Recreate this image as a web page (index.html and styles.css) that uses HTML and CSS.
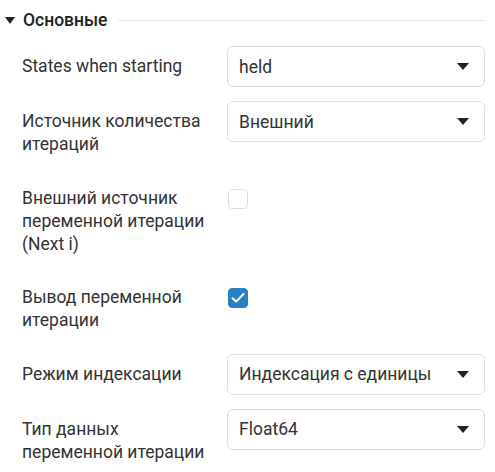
FILE: index.html
```html
<!DOCTYPE html>
<html lang="ru">
<head>
    <meta charset="UTF-8">
    <meta name="viewport" content="width=device-width, initial-scale=1.0">
    <title>Основные</title>
    <link rel="stylesheet" href="styles.css">
</head>
<body>
    <section class="group">
        <div class="group-head">
            <span class="caret"></span>
            <span class="group-title">Основные</span>
            <span class="group-line"></span>
        </div>

        <div class="row">
            <div class="label">States when starting</div>
            <div class="select"><span>held</span><span class="arrow"></span></div>
        </div>

        <div class="row">
            <div class="label">Источник количества итераций</div>
            <div class="select"><span>Внешний</span><span class="arrow"></span></div>
        </div>

        <div class="row">
            <div class="label">Внешний источник переменной итерации (Next i)</div>
            <div class="check-wrap"><span class="check"></span></div>
        </div>

        <div class="row">
            <div class="label">Вывод переменной итерации</div>
            <div class="check-wrap">
                <span class="check checked">
                    <svg width="14" height="12" viewBox="0 0 14 12"><path d="M1.5 6.2 L5.2 9.6 L12.5 2" fill="none" stroke="#fff" stroke-width="2" stroke-linecap="round" stroke-linejoin="round"/></svg>
                </span>
            </div>
        </div>

        <div class="row">
            <div class="label">Режим индексации</div>
            <div class="select"><span>Индексация с единицы</span><span class="arrow"></span></div>
        </div>

        <div class="row">
            <div class="label">Тип данных переменной итерации</div>
            <div class="select"><span>Float64</span><span class="arrow"></span></div>
        </div>
    </section>
</body>
</html>
```

FILE: styles.css
```css
body {
    margin: 0;
    padding: 0;
    font-family: Roboto, 'Liberation Sans', sans-serif;
    font-size: 17.5px;
    color: #333;
    background: #fff;
}

.group {
    padding: 8px 10px 0 5px;
}

.group-head {
    display: flex;
    align-items: center;
    height: 24px;
}

.caret {
    width: 0;
    height: 0;
    border-left: 5.5px solid transparent;
    border-right: 5.5px solid transparent;
    border-top: 7px solid #222;
    margin-right: 8px;
}

.group-title {
    font-weight: 500;
    color: #222;
}

.group-line {
    flex: 1;
    height: 1px;
    background: #e6e6e6;
    margin-left: 11px;
}

.row {
    display: grid;
    grid-template-columns: 183px 258px;
    column-gap: 22px;
    margin-left: 17px;
    margin-top: 14px;
    align-items: start;
}

.row:first-of-type {
    margin-top: 13px;
}

.label {
    line-height: 23px;
    padding: 9px 0 7.5px;
}

.select {
    height: 41px;
    box-sizing: border-box;
    border: 1px solid #dcdcdc;
    border-radius: 6px;
    display: flex;
    align-items: center;
    justify-content: space-between;
    padding: 0 15px 0 11px;
}

.arrow {
    width: 0;
    height: 0;
    border-left: 6px solid transparent;
    border-right: 6px solid transparent;
    border-top: 7px solid #222;
}

.check-wrap {
    padding-top: 11px;
    padding-left: 1px;
}

.check {
    display: flex;
    align-items: center;
    justify-content: center;
    width: 20px;
    height: 20px;
    box-sizing: border-box;
    border: 1px solid #dcdcdc;
    border-radius: 4px;
}

.check.checked {
    background: #2680c2;
    border-color: #2680c2;
}
```
